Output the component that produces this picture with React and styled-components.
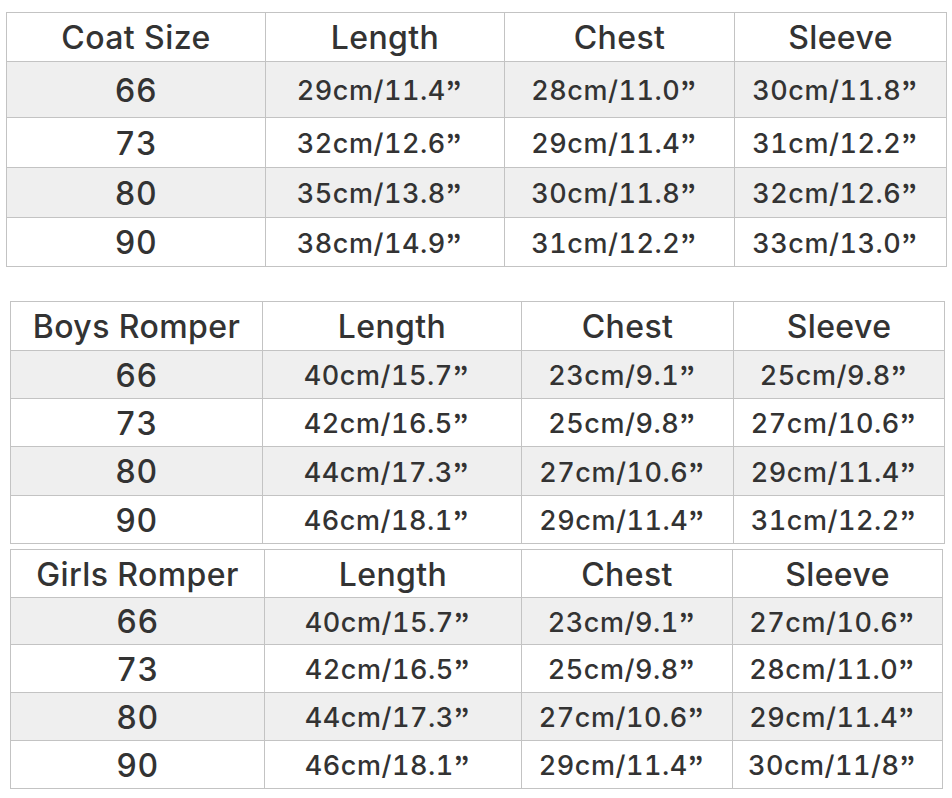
import React from "react";
import styled, { createGlobalStyle } from "styled-components";

const Global = createGlobalStyle`
  html, body { margin: 0; padding: 0; background: #ffffff; }
  body { font-family: Inter, "Noto Sans", sans-serif; color: #333333; }
`;

const Page = styled.div`
  width: 952px;
  height: 798px;
  padding-top: 12px;
  box-sizing: border-box;
  display: flex;
  flex-direction: column;
`;

const Table = styled.div`
  display: grid;
  grid-template-columns: ${(p) => p.$cols};
  grid-template-rows: ${(p) => p.$rows};
  margin-left: ${(p) => p.$left}px;
  margin-top: ${(p) => p.$top}px;
  width: max-content;
  border-top: 1px solid #c3c3c3;
  border-left: 1px solid #c3c3c3;
`;

const Cell = styled.div`
  box-sizing: border-box;
  border-right: 1px solid #c3c3c3;
  border-bottom: 1px solid #c3c3c3;
  background: ${(p) => (p.$shade ? "#efefef" : "#ffffff")};
  display: flex;
  align-items: center;
  justify-content: center;
  white-space: nowrap;
  font-family: Inter, "Noto Sans", sans-serif;
  font-size: ${(p) => (p.$big ? "32px" : "27px")};
  font-weight: 500;
  font-variant-numeric: tabular-nums;
  letter-spacing: ${(p) => (p.$big ? "0.4px" : "0.5px")};
  padding-right: ${(p) => (p.$value ? "12px" : "0")};
  padding-top: 2px;
  color: #333333;
  line-height: 1;
`;

const Quote = styled.span`
  font-family: "Noto Sans CJK JP", "Noto Sans", sans-serif;
  font-weight: 700;
  letter-spacing: 0;
`;

const tables = [
  {
    left: 6,
    top: 0,
    cols: "259px 239px 230px 212px",
    rows: "49px 56px 50px 50px 49px",
    head: ["Coat Size", "Length", "Chest", "Sleeve"],
    data: [
      ["66", "29cm/11.4", "28cm/11.0", "30cm/11.8"],
      ["73", "32cm/12.6", "29cm/11.4", "31cm/12.2"],
      ["80", "35cm/13.8", "30cm/11.8", "32cm/12.6"],
      ["90", "38cm/14.9", "31cm/12.2", "33cm/13.0"],
    ],
  },
  {
    left: 10,
    top: 34,
    cols: "252px 259px 212px 211px",
    rows: "49px 48px 48px 49px 48px",
    head: ["Boys Romper", "Length", "Chest", "Sleeve"],
    data: [
      ["66", "40cm/15.7", "23cm/9.1", "25cm/9.8"],
      ["73", "42cm/16.5", "25cm/9.8", "27cm/10.6"],
      ["80", "44cm/17.3", "27cm/10.6", "29cm/11.4"],
      ["90", "46cm/18.1", "29cm/11.4", "31cm/12.2"],
    ],
  },
  {
    left: 10,
    top: 5,
    cols: "254px 257px 211px 210px",
    rows: "48px 47px 48px 48px 48px",
    head: ["Girls Romper", "Length", "Chest", "Sleeve"],
    data: [
      ["66", "40cm/15.7", "23cm/9.1", "27cm/10.6"],
      ["73", "42cm/16.5", "25cm/9.8", "28cm/11.0"],
      ["80", "44cm/17.3", "27cm/10.6", "29cm/11.4"],
      ["90", "46cm/18.1", "29cm/11.4", "30cm/11/8"],
    ],
  },
];

export default function App() {
  return (
    <>
      <Global />
      <Page>
        {tables.map((t, ti) => (
          <Table key={ti} $cols={t.cols} $rows={t.rows} $left={t.left} $top={t.top}>
            {t.head.map((h, i) => (
              <Cell key={"h" + i} $big>
                {h}
              </Cell>
            ))}
            {t.data.map((row, ri) =>
              row.map((c, ci) => (
                <Cell
                  key={ri + "-" + ci}
                  $shade={ri % 2 === 0}
                  $big={ci === 0}
                  $value={ci > 0}
                >
                  {c}
                  {ci > 0 && <Quote>”</Quote>}
                </Cell>
              ))
            )}
          </Table>
        ))}
      </Page>
    </>
  );
}
